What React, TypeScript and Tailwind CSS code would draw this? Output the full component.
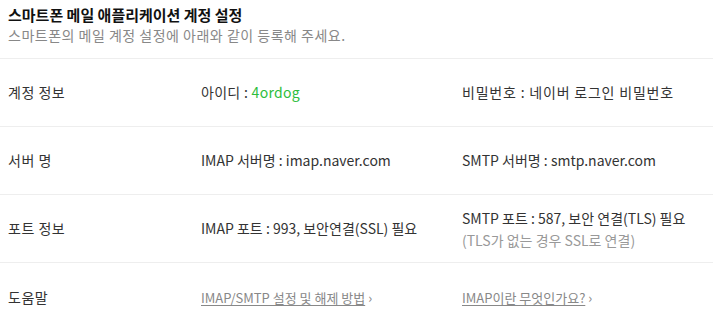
import React from "react";

const font = { fontFamily: '"Noto Sans CJK KR", "Noto Sans", sans-serif' };

const Row = ({
  label,
  a,
  b,
  last,
}: {
  label: string;
  a: React.ReactNode;
  b: React.ReactNode;
  last?: boolean;
}) => (
  <div
    className={`grid grid-cols-[193px_261px_1fr] items-center h-[68px] pl-2 text-[14px] text-[#333] ${
      last ? "" : "border-b border-[#eeeeee]"
    }`}
  >
    <div className="tracking-[0.5px]">{label}</div>
    <div>{a}</div>
    <div>{b}</div>
  </div>
);

const App = () => {
  return (
    <div className="w-[713px] h-[321px] bg-white overflow-hidden" style={font}>
      <div className="pl-2 pt-[4px] h-[59px] border-b border-[#eeeeee]">
        <div className="text-[15px] font-bold text-[#111] leading-[21px]">
          스마트폰 메일 애플리케이션 계정 설정
        </div>
        <div className="text-[14px] text-[#888] leading-[21px] tracking-[0.5px]">
          스마트폰의 메일 계정 설정에 아래와 같이 등록해 주세요.
        </div>
      </div>
      <Row
        label="계정 정보"
        a={
          <span className="tracking-[0.3px]">
            아이디 : <span className="text-[#2dbd3c]">4ordog</span>
          </span>
        }
        b={<span className="tracking-[0.8px]">비밀번호 : 네이버 로그인 비밀번호</span>}
      />
      <Row
        label="서버 명"
        a="IMAP 서버명 : imap.naver.com"
        b="SMTP 서버명 : smtp.naver.com"
      />
      <Row
        label="포트 정보"
        a="IMAP 포트 : 993, 보안연결(SSL) 필요"
        b={
          <div className="leading-[22px]">
            <div>SMTP 포트 : 587, 보안 연결(TLS) 필요</div>
            <div className="text-[#999]">(TLS가 없는 경우 SSL로 연결)</div>
          </div>
        }
      />
      <Row
        label="도움말"
        last
        a={
          <span className="text-[#888] text-[13px]">
            <span className="underline underline-offset-2">IMAP/SMTP 설정 및 해제 방법</span>
            <span className="ml-[3px]">›</span>
          </span>
        }
        b={
          <span className="text-[#888] text-[13px]">
            <span className="underline underline-offset-2">IMAP이란 무엇인가요?</span>
            <span className="ml-[3px]">›</span>
          </span>
        }
      />
    </div>
  );
};

export default App;
